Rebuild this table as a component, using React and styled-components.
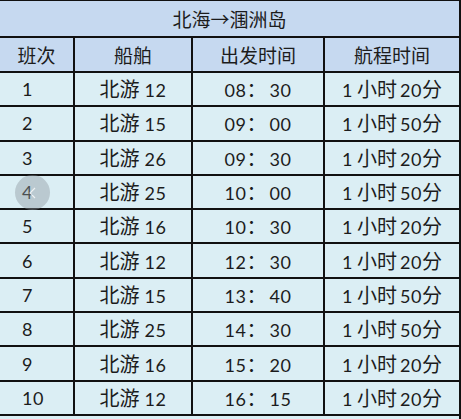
import React from 'react'
import styled, { createGlobalStyle } from 'styled-components'

const GlobalStyle = createGlobalStyle`
	html, body {
		margin: 0;
		padding: 0;
		background: #dbeef4;
		overflow: hidden;
	}
	body {
		font-family: Lato, "Noto Sans CJK SC", sans-serif;
	}
`

const Page = styled('div')`
	position: relative;
	width: 461px;
	height: 419px;
	overflow: hidden;
`

const Table = styled('table')`
	border-collapse: collapse;
	table-layout: fixed;
	width: 461px;
	margin-left: -2px;
	margin-top: -1px;
	background: #dbeef4;
	color: #1c1c1c;
`

const TitleCell = styled('th')`
	height: 35px;
	padding: 0;
	background: #c6d9f0;
	border: 2px solid #111;
	font-family: "Noto Sans CJK SC", sans-serif;
	font-weight: 400;
	font-size: 19px;
	line-height: 1;
	text-align: center;
`

const HeadCell = styled('th')`
	height: 33px;
	padding: 0;
	background: #c6d9f0;
	border: 2px solid #111;
	font-family: "Noto Sans CJK SC", sans-serif;
	font-weight: 400;
	font-size: 19px;
	line-height: 1;
	text-align: center;
`

const Cell = styled('td')`
	height: 32.3px;
	padding: 0;
	border: 2px solid #111;
	font-size: 18px;
	line-height: 1;
	letter-spacing: 0.5px;
	white-space: nowrap;
	text-align: ${p => (p.$left ? 'left' : 'center')};
	padding-left: ${p => (p.$left ? 22 : 0)}px;
`

const Cjk = styled('span')`
	font-family: "Noto Sans CJK SC", sans-serif;
	font-size: 20px;
	letter-spacing: 0;
`

const Gap = styled('span')`
	display: inline-block;
	width: ${p => p.$w}px;
`

const FootCell = styled('td')`
	height: 20px;
	border-right: 2px solid #111;
`

const BackButton = styled('div')`
	position: absolute;
	left: 15px;
	top: 175px;
	width: 35px;
	height: 35px;
	border-radius: 50%;
	background: rgba(140, 150, 158, 0.42);
	display: flex;
	align-items: center;
	justify-content: center;
`

const rows = [
	['1', '12', '08', '30', '20'],
	['2', '15', '09', '00', '50'],
	['3', '26', '09', '30', '20'],
	['4', '25', '10', '00', '50'],
	['5', '16', '10', '30', '20'],
	['6', '12', '12', '30', '20'],
	['7', '15', '13', '40', '50'],
	['8', '25', '14', '30', '50'],
	['9', '16', '15', '20', '20'],
	['10', '12', '16', '15', '20'],
]

function App() {
	return (
		<Page>
			<GlobalStyle />
			<Table>
				<colgroup>
					<col style={{ width: 75 }} />
					<col style={{ width: 118 }} />
					<col style={{ width: 132 }} />
					<col style={{ width: 136 }} />
				</colgroup>
				<thead>
					<tr>
						<TitleCell colSpan={4}>北海→涠洲岛</TitleCell>
					</tr>
					<tr>
						<HeadCell>班次</HeadCell>
						<HeadCell>船舶</HeadCell>
						<HeadCell>出发时间</HeadCell>
						<HeadCell>航程时间</HeadCell>
					</tr>
				</thead>
				<tbody>
					{rows.map(([no, ship, h, m, dur]) => (
						<tr key={no}>
							<Cell $left>{no}</Cell>
							<Cell><Cjk>北游</Cjk><Gap $w={5} />{ship}</Cell>
							<Cell>{h}<Cjk>：</Cjk><Gap $w={3} />{m}</Cell>
							<Cell>1<Gap $w={4} /><Cjk>小时</Cjk><Gap $w={3} />{dur}<Cjk>分</Cjk></Cell>
						</tr>
					))}
					<tr>
						<FootCell colSpan={4} />
					</tr>
				</tbody>
			</Table>
			<BackButton>
				<svg width="14" height="14" viewBox="0 0 14 14">
					<path d="M9 2 L4 7 L9 12" fill="none" stroke="rgba(255,255,255,0.75)" strokeWidth="1.2" />
				</svg>
			</BackButton>
		</Page>
	)
}

export default App
